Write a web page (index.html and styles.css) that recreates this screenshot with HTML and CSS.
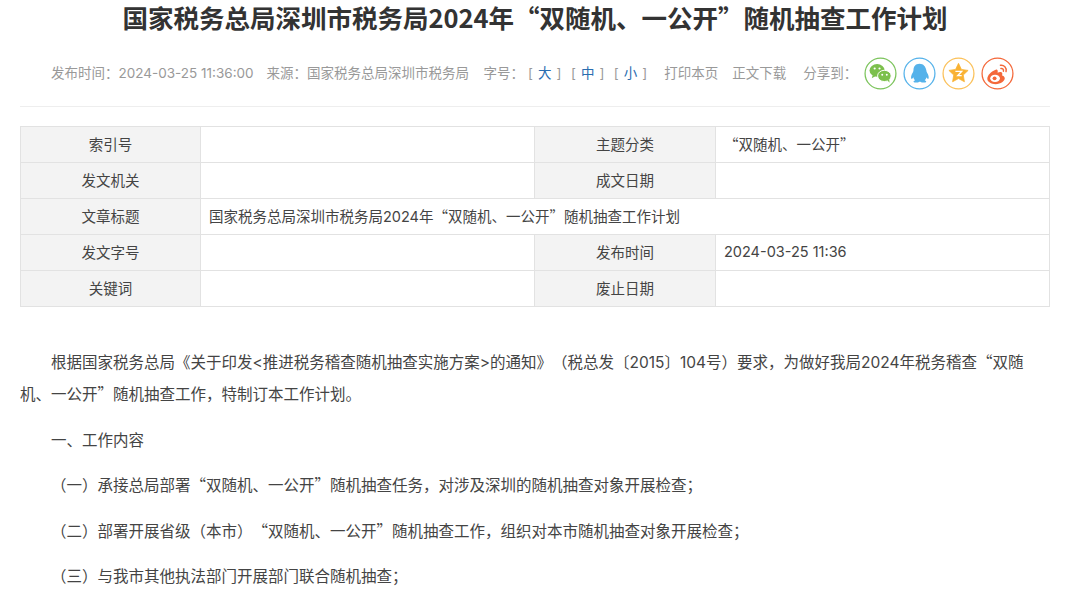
FILE: index.html
```html
<!DOCTYPE html>
<html lang="zh-CN">
<head>
<meta charset="utf-8">
<title>国家税务总局深圳市税务局2024年“双随机、一公开”随机抽查工作计划</title>
<link rel="stylesheet" href="styles.css">
</head>
<body>
<main class="page">
  <h1 class="title">国家税务总局深圳市税务局2024年“双随机、一公开”随机抽查工作计划</h1>
  <div class="meta">
    <span class="m-time">发布时间：2024-03-25 11:36:00</span>
    <span class="m-src">来源：国家税务总局深圳市税务局</span>
    <span class="m-size">字号：</span>
    <span class="sizes">[<a>大</a>]</span><span class="sizes">[<a>中</a>]</span><span class="sizes">[<a>小</a>]</span>
    <span class="m-print">打印本页</span>
    <span class="m-down">正文下载</span>
    <span class="m-share">分享到：</span>
    <span class="icons">
      <svg class="ico" viewBox="0 0 34 34"><circle cx="17" cy="17" r="15.9" fill="#fff" stroke="#7cc45c" stroke-width="1.3"/><ellipse cx="13.500" cy="13.800" rx="7.800" ry="6.500" fill="#7cc04c"/><path d="M9 18.500l-1 3.500 4-2.300z" fill="#7cc04c"/><ellipse cx="21" cy="19.500" rx="7" ry="5.800" fill="#7cc04c" stroke="#fff" stroke-width="1"/><path d="M24 24l2.300 2.500-.3-3.800z" fill="#7cc04c"/><circle cx="11" cy="11.800" r="1.100" fill="#fff"/><circle cx="16" cy="11.800" r="1.100" fill="#fff"/><circle cx="18.800" cy="18.300" r="1" fill="#fff"/><circle cx="23.500" cy="18.300" r="1" fill="#fff"/></svg>
      <svg class="ico" viewBox="0 0 34 34"><circle cx="17" cy="17" r="15.9" fill="#fff" stroke="#55b2ea" stroke-width="1.3"/><path d="M17 7c-4.200 0-6.200 3-6.200 6.500 0 .9-.2 1.600-.8 2.700-1.400 2.200-2.100 4.500-1.500 6 .4.900 1.300 0 2.100-1.300.3 1.300.9 2.400 1.800 3.100-1.200.5-1.800 1.100-1.400 1.700.6.800 4.800.8 6-.3h.8c1.200 1.100 5.400 1.100 6 .3.400-.6-.2-1.200-1.400-1.700.9-.7 1.500-1.800 1.800-3.100.8 1.300 1.700 2.200 2.100 1.300.6-1.500-.1-3.800-1.500-6-.6-1.100-.8-1.800-.8-2.700C23.200 10 21.200 7 17 7z" fill="#55b2ea"/></svg>
      <svg class="ico" viewBox="0 0 34 34"><circle cx="17" cy="17" r="15.9" fill="#fff" stroke="#fbc15a" stroke-width="1.3"/><path d="M17 6.500l3 6.300 6.900 1-5 4.800 1.200 6.900-6.100-3.300-6.100 3.300 1.200-6.900-5-4.800 6.900-1z" fill="#f9b233" stroke="#f9b233" stroke-width=".8" stroke-linejoin="round"/><path d="M13.800 14.800h6.400l-3.900 4.400h4" fill="none" stroke="#fff" stroke-width="1.500"/></svg>
      <svg class="ico" viewBox="0 0 34 34"><circle cx="17" cy="17" r="15.9" fill="#fff" stroke="#f4683a" stroke-width="1.3"/><path d="M14.500 13.500c-4 1.500-8 5.500-8 9 0 3.300 4 5.500 8.500 5.500 5.500 0 9.500-3.200 9.500-6 0-2-1.800-2.700-2.800-3 .5-1.500.4-2.700-.6-3.200-1.200-.6-3 0-4 .4.300-1.500.2-2.500-.5-3-.6-.4-1.400-.2-2.100.3z" fill="#f4683a"/><ellipse cx="14.500" cy="22" rx="5" ry="3.800" fill="#fff"/><circle cx="14" cy="22" r="2" fill="#f4683a"/><path d="M20 8.500c3.600-.6 6.800 2.400 5.800 6.500M20.500 11.800c1.800-.3 3 1 2.600 2.800" fill="none" stroke="#f4683a" stroke-width="1.500" stroke-linecap="round"/></svg>
    </span>
  </div>
  <table class="info">
    <colgroup><col class="c1"><col class="c2"><col class="c3"><col class="c4"></colgroup>
    <tr><th>索引号</th><td></td><th>主题分类</th><td><span class="q">“</span>双随机、一公开<span class="q">”</span></td></tr>
    <tr><th>发文机关</th><td></td><th>成文日期</th><td></td></tr>
    <tr><th>文章标题</th><td colspan="3">国家税务总局深圳市税务局2024年<span class="q">“</span>双随机、一公开<span class="q">”</span>随机抽查工作计划</td></tr>
    <tr><th>发文字号</th><td></td><th>发布时间</th><td>2024-03-25 11:36</td></tr>
    <tr><th>关键词</th><td></td><th>废止日期</th><td></td></tr>
  </table>
  <article class="content">
    <p>根据国家税务总局《关于印发&lt;推进税务稽查随机抽查实施方案&gt;的通知》（税总发〔2015〕104号）要求，为做好我局2024年税务稽查<span class="q">“</span>双随机、一公开<span class="q">”</span>随机抽查工作，特制订本工作计划。</p>
    <p>一、工作内容</p>
    <p>（一）承接总局部署<span class="q">“</span>双随机、一公开<span class="q">”</span>随机抽查任务，对涉及深圳的随机抽查对象开展检查；</p>
    <p>（二）部署开展省级（本市）<span class="q">“</span>双随机、一公开<span class="q">”</span>随机抽查工作，组织对本市随机抽查对象开展检查；</p>
    <p>（三）与我市其他执法部门开展部门联合随机抽查；</p>
  </article>
</main>
</body>
</html>
```

FILE: styles.css
```css
html, body { margin: 0; padding: 0; background: #fff; }
body { height: 592px; overflow: hidden; font-family: Inter, "Noto Sans CJK SC", sans-serif; color: #444; text-spacing-trim: space-all; }
.page { padding: 0 30px 0 20px; }
.title { margin: 0; height: 34px; line-height: 34px; font-family: "Noto Sans CJK SC", sans-serif; font-size: 25.500px; font-weight: 700; color: #333; text-align: center; white-space: nowrap; }
.meta { display: flex; align-items: center; height: 68px; margin-bottom: 19px; padding: 4px 0 0 31px; border-bottom: 1px solid #eee; font-size: 13.500px; color: #999; white-space: nowrap; }
.m-src { margin-left: 13px; }
.m-size { margin-left: 14.500px; margin-right: 4px; }
.sizes { margin-right: 9.500px; }
.sizes a { color: #2a6db0; margin: 0 5px; }
.m-print { margin-left: 7.500px; }
.m-down { margin-left: 14px; }
.m-share { margin-left: 17px; }
.icons { display: flex; gap: 6px; margin-left: 7px; margin-top: 3px; }
.ico { width: 33px; height: 33px; display: block; }
.info { width: 1029px; border-collapse: collapse; table-layout: fixed; font-size: 14.500px; }
.c1 { width: 180px; }
.c2 { width: 334px; }
.c3 { width: 181px; }
.c4 { width: 334px; }
.info tr { height: 36px; }
.info th, .info td { border: 1px solid #e2e2e2; padding: 0 8px 2px; font-weight: 400; color: #444; }
.info th { background: #f3f3f3; text-align: center; }
.info td { text-align: left; }
.q { font-family: "Noto Sans CJK SC", sans-serif; line-height: 0; }
.content { margin-top: 40px; font-size: 15.500px; line-height: 32px; color: #444; }
.content p { margin: 0 0 13.500px; text-indent: 2em; }
```
